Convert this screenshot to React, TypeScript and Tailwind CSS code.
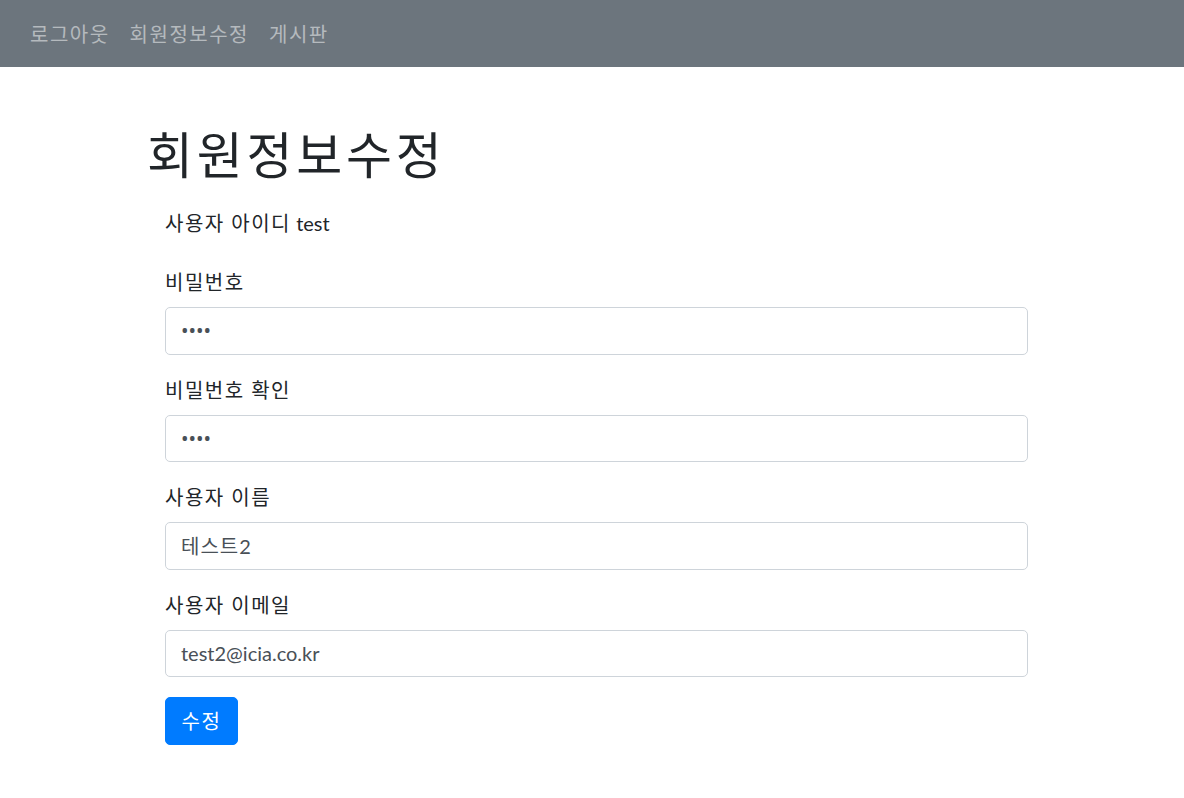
import React from "react";

const font = { fontFamily: 'Lato, "Noto Sans CJK KR", sans-serif' };
const pwFont = { fontFamily: '"Noto Sans", "Noto Sans CJK KR", sans-serif' };

function K({ children }: { children: React.ReactNode }) {
  return <span className="tracking-[0.075em]">{children}</span>;
}

function Field({ label, value, type = "text", korean = false }: { label: string; value: string; type?: string; korean?: boolean }) {
  return (
    <div className="mb-[20px]">
      <label className="block text-[20px] leading-[30px] mb-[10px] text-[#212529]">
        <K>{label}</K>
      </label>
      <input
        type={type}
        defaultValue={value}
        readOnly
        className={
          "block w-full h-[47.5px] px-[15px] text-[20px] leading-[30px] text-[#495057] bg-white border border-[#ced4da] rounded-[5px] outline-none " +
          (korean ? "tracking-[0.05em]" : "")
        }
        style={type === "password" ? pwFont : font}
      />
    </div>
  );
}

export default function App() {
  return (
    <div className="min-h-screen bg-white" style={font}>
      <nav className="h-[67px] bg-[#6c757d] flex items-center px-[20px]">
        {["로그아웃", "회원정보수정", "게시판"].map((t) => (
          <a key={t} className="px-[10px] py-[10px] text-[20px] leading-[30px] text-white/50 cursor-pointer">
            <K>{t}</K>
          </a>
        ))}
      </nav>
      <div className="pl-[147px]">
        <h1 className="mt-[58px] text-[50px] leading-[60px] font-normal text-[#212529]">
          <K>회원정보수정</K>
        </h1>
        <div className="pl-[18px] w-[881px]">
          <p className="mt-[23px] text-[20px] leading-[30px] text-[#212529]">
            <K>사용자 아이디</K> test
          </p>
          <div className="mt-[29px]">
            <Field label="비밀번호" value="1234" type="password" />
            <Field label="비밀번호 확인" value="1234" type="password" />
            <Field label="사용자 이름" value="테스트2" korean />
            <Field label="사용자 이메일" value="test2@icia.co.kr" />
            <button className="h-[47.5px] w-[73px] px-[15px] text-[20px] leading-[30px] text-white bg-[#007bff] rounded-[5px] border border-[#007bff]">
              <K>수정</K>
            </button>
          </div>
        </div>
      </div>
    </div>
  );
}
